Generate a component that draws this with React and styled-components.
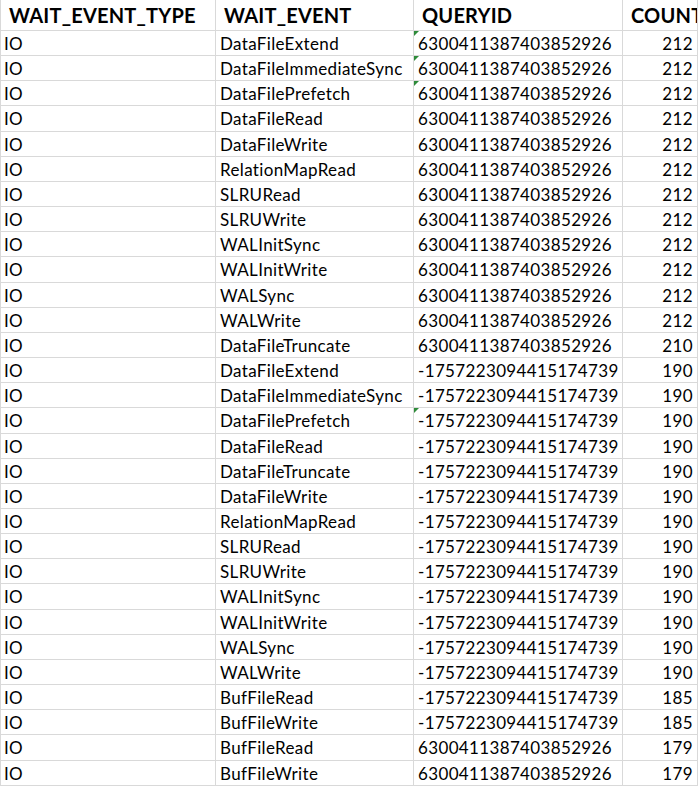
import styled, { createGlobalStyle, css } from "styled-components";

const GlobalStyle = createGlobalStyle`
  html, body {
    margin: 0;
    padding: 0;
    background: #ffffff;
  }
  body {
    font-family: "Lato", "Noto Sans", sans-serif;
    color: #000000;
  }
`;

const HIGH = "6300411387403852926";
const LOW = "-1757223094415174739";

const rows = [
  ["DataFileExtend", HIGH, 212, true],
  ["DataFileImmediateSync", HIGH, 212, true],
  ["DataFilePrefetch", HIGH, 212, true],
  ["DataFileRead", HIGH, 212],
  ["DataFileWrite", HIGH, 212],
  ["RelationMapRead", HIGH, 212],
  ["SLRURead", HIGH, 212],
  ["SLRUWrite", HIGH, 212],
  ["WALInitSync", HIGH, 212],
  ["WALInitWrite", HIGH, 212],
  ["WALSync", HIGH, 212],
  ["WALWrite", HIGH, 212],
  ["DataFileTruncate", HIGH, 210],
  ["DataFileExtend", LOW, 190],
  ["DataFileImmediateSync", LOW, 190],
  ["DataFilePrefetch", LOW, 190, true],
  ["DataFileRead", LOW, 190],
  ["DataFileTruncate", LOW, 190],
  ["DataFileWrite", LOW, 190],
  ["RelationMapRead", LOW, 190],
  ["SLRURead", LOW, 190],
  ["SLRUWrite", LOW, 190],
  ["WALInitSync", LOW, 190],
  ["WALInitWrite", LOW, 190],
  ["WALSync", LOW, 190],
  ["WALWrite", LOW, 190],
  ["BufFileRead", LOW, 185],
  ["BufFileWrite", LOW, 185],
  ["BufFileRead", HIGH, 179],
  ["BufFileWrite", HIGH, 179],
];

const Sheet = styled.table`
  border-collapse: collapse;
  table-layout: fixed;
  width: 697px;
`;

const HeadCell = styled.th`
  padding: 1px 0 0 8px;
  line-height: 29px;
  text-align: left;
  font-weight: 700;
  font-size: 20px;
  letter-spacing: 0.2px;
  white-space: nowrap;
  overflow: hidden;
  border-right: 1px solid #d9d9d9;
  border-bottom: 1px solid #d9d9d9;
  vertical-align: middle;
  &:first-child {
    border-left: 1px solid #d9d9d9;
  }
`;

const Cell = styled.td`
  position: relative;
  padding: 1px 4px 0 4px;
  line-height: 23.15px;
  font-size: 17px;
  letter-spacing: 0.35px;
  white-space: nowrap;
  overflow: hidden;
  text-align: ${(p) => (p.$num ? "right" : "left")};
  border-right: 1px solid #d9d9d9;
  border-bottom: 1px solid #d9d9d9;
  vertical-align: middle;
  &:first-child {
    border-left: 1px solid #d9d9d9;
    padding-left: 3px;
  }
  ${(p) =>
    p.$flag &&
    css`
      &::before {
        content: "";
        position: absolute;
        top: 0;
        left: 0;
        border-top: 5px solid #2e8b3a;
        border-right: 5px solid transparent;
      }
    `}
`;

const Col = styled.col`
  width: ${(p) => p.$w}px;
`;

export default function App() {
  return (
    <>
      <GlobalStyle />
      <Sheet>
        <colgroup>
          <Col $w={215} />
          <Col $w={198} />
          <Col $w={209} />
          <Col $w={75} />
        </colgroup>
        <thead>
          <tr>
            <HeadCell>WAIT_EVENT_TYPE</HeadCell>
            <HeadCell>WAIT_EVENT</HeadCell>
            <HeadCell>QUERYID</HeadCell>
            <HeadCell>COUNT</HeadCell>
          </tr>
        </thead>
        <tbody>
          {rows.map(([event, id, count, flag], i) => (
            <tr key={i}>
              <Cell>IO</Cell>
              <Cell>{event}</Cell>
              <Cell $flag={flag}>{id}</Cell>
              <Cell $num>{count}</Cell>
            </tr>
          ))}
        </tbody>
      </Sheet>
    </>
  );
}
